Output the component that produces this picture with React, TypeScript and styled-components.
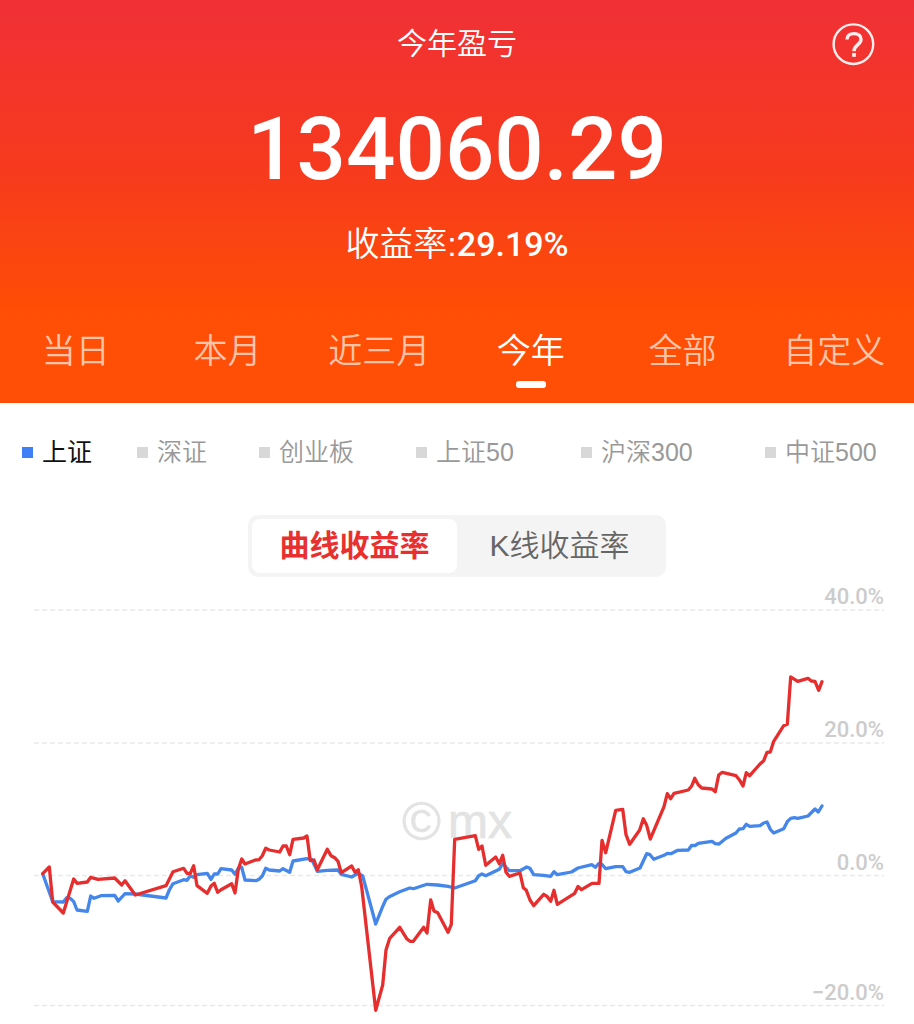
import React, { useState } from "react";
import styled, { createGlobalStyle } from "styled-components";

const GlobalStyle = createGlobalStyle`
  *, *::before, *::after { box-sizing: border-box; }
  body {
    margin: 0;
    background: #fff;
    font-family: "Liberation Sans", "Noto Sans CJK SC", sans-serif;
  }
  button {
    margin: 0;
    padding: 0;
    border: 0;
    background: none;
    font: inherit;
    cursor: pointer;
  }
`;

const Page = styled.main`
  display: flex;
  flex-direction: column;
`;

const Header = styled.header`
  display: flex;
  flex-direction: column;
  background: linear-gradient(180deg, #f03036 0%, #f6391f 40%, #ff4e05 78%);
  color: #fff;
`;

const TitleRow = styled.div`
  display: grid;
  grid-template-columns: 1fr auto 1fr;
  align-items: center;
  height: 88px;
  padding: 0 39px;
`;

const Title = styled.h1`
  grid-column: 2;
  margin: 0;
  font-size: 30px;
  line-height: 40px;
  font-weight: 350;
`;

const HelpButton = styled.button`
  justify-self: end;
  width: 44px;
  height: 44px;
  color: #fff;
  svg { display: block; }
`;

const Amount = styled.p`
  margin: 0;
  height: 120px;
  text-align: center;
  font-family: Roboto, sans-serif;
  font-size: 87px;
  line-height: 122px;
  font-weight: 500;
`;

const Rate = styled.p`
  margin: 0;
  text-align: center;
  font-size: 34px;
  line-height: 72px;
  font-weight: 350;
`;

const RateValue = styled.strong`
  font-family: Roboto, sans-serif;
  font-weight: 500;
`;

const PeriodTabs = styled.nav`
  display: grid;
  grid-template-columns: repeat(6, 1fr);
  margin-top: 40px;
  padding-right: 4px;
`;

const PeriodTab = styled.button<{ $active: boolean }>`
  display: flex;
  flex-direction: column;
  align-items: center;
  height: 83px;
  padding-top: 9px;
  font-size: 34px;
  line-height: 44px;
  font-weight: 350;
  color: ${(p) => (p.$active ? "#fff" : "#ffc4a8")};
  white-space: nowrap;
  &::after {
    content: "";
    width: 30px;
    height: 7px;
    margin-top: 8px;
    border-radius: 3px;
    background: ${(p) => (p.$active ? "#fff" : "transparent")};
  }
`;

const IndexList = styled.div`
  display: grid;
  grid-template-columns: 115fr 122fr 157fr 165fr 184fr 149fr;
  padding: 31px 0 0 22px;
`;

const IndexItem = styled.button<{ $active: boolean }>`
  display: flex;
  align-items: center;
  gap: 9px;
  font-size: 25px;
  line-height: 36px;
  font-weight: ${(p) => (p.$active ? 400 : 350)};
  color: ${(p) => (p.$active ? "#111" : "#999")};
  white-space: nowrap;
  &::before {
    content: "";
    width: 11px;
    height: 11px;
    background: ${(p) => (p.$active ? "#3f80f6" : "#d8d8d8")};
  }
`;

const ModeSwitch = styled.div`
  display: grid;
  grid-template-columns: 205px 205px;
  align-self: center;
  margin-top: 45px;
  padding: 4px;
  border-radius: 10px;
  background: #f4f4f4;
`;

const ModeButton = styled.button<{ $active: boolean }>`
  height: 54px;
  border-radius: 8px;
  font-size: 30px;
  line-height: 54px;
  font-weight: ${(p) => (p.$active ? 700 : 350)};
  color: ${(p) => (p.$active ? "#e93030" : "#666")};
  background: ${(p) => (p.$active ? "#fff" : "transparent")};
`;

const Chart = styled.svg`
  display: block;
  width: 100%;
  height: auto;
  margin-top: 7px;
`;

const GridLine = styled.line`
  stroke: #e9e9e9;
  stroke-width: 1.5;
  stroke-dasharray: 5 3;
`;

const AxisLabel = styled.text`
  font-family: Roboto, sans-serif;
  font-size: 22px;
  font-weight: 500;
  fill: #cccccc;
  text-anchor: end;
`;

const Watermark = styled.text<{ $size: number }>`
  font-size: ${(p) => p.$size}px;
  fill: #e3e3e3;
  stroke: #e3e3e3;
  stroke-width: 0.6;
`;

const Series = styled.polyline`
  fill: none;
  stroke-width: 3.3;
  stroke-linejoin: round;
  stroke-linecap: round;
`;

const periods = ["当日", "本月", "近三月", "今年", "全部", "自定义"];
const indexes = ["上证", "深证", "创业板", "上证50", "沪深300", "中证500"];
const modes = ["曲线收益率", "K线收益率"];

const gridLines = [
  { y: 610, label: "40.0%" },
  { y: 743, label: "20.0%" },
  { y: 875.5, label: "0.0%" },
  { y: 1005.5, label: "−20.0%" },
];

const indexPoints =
  "42.7,873.7 52.7,901.7 63.3,902 66.7,897.7 70.3,898.3 73.7,901.7 77,910 87.3,911.3 90.7,896 94,898.3 101,895.7 114.7,895.3 118.3,901 125,893.7 135.3,894 166,898 169.3,890 173,883.7 183.7,879.7 187,880.3 190.3,875.7 193.7,877.3 197,874.7 207.3,873.3 211,879.3 214.3,874 217.7,874 221,868.7 231.7,870 235,874.3 238.3,868.3 241.7,867.3 245,880 256,880.7 259,879.3 262.3,876 265.7,868.3 269.3,870 279.7,871 283,868.7 289.7,872.3 293,861 307,858.7 311.7,859.3 317.3,871.3 327.3,870.3 338,870 341.3,874.3 351.7,877 355,875 358.3,873.3 362.7,876 375.7,924 382.3,907.3 386,899.3 389.3,896.7 399.7,891.7 409.7,888 413.3,888.7 427,884.3 437.7,885 448,886.3 454.7,888 475.3,880.7 478.7,875.7 482,874 485.7,875.7 499.3,869.3 502.7,863.3 506,867.3 509.3,870.7 520,870.7 526.7,867 530,868.3 533.7,874.7 543.7,875.3 550.7,876.3 554,871.7 557.3,874.7 571.5,872 578,868 592,864.7 595.3,867.3 598.7,863.7 602.3,864.7 605.7,868.7 615.7,866.7 622.7,866.7 626,871.7 629.7,872.3 640,868 646.7,853.7 650,854.7 653.7,859.3 664,855.3 667.3,853.3 671,853.7 677.7,850.3 688.3,850 691.7,845.3 695,845.7 698.3,843.3 712,841.3 715.3,843.7 719,844 726,838.3 736,833 739.3,829 743,828.7 746.3,824.3 749.7,826.3 760,825.7 763.7,823 767,822 770.3,829.3 773.7,833 783.7,828.7 787.3,821.7 790.7,818.3 794.3,817.7 797.7,818.3 808,816 815,809 818.3,812 822,806";

const accountPoints =
  "42.7,873.7 49.3,867 52.7,902 63.3,913 73.7,879 77,883.3 87.3,882 90.7,877.3 98,879.3 114.7,878 121.7,885 125,880.7 135.3,895 166,885.7 173,871.7 183.7,868.3 187,873.3 190.3,873.3 193.7,865.7 197,885.7 207.3,893.3 211,886 214.3,883.3 217.7,892.3 221,889.7 231.7,883.7 235,893 238.3,869.3 241.7,859 245,864 255.3,860 259,859.7 262.3,855.7 265.7,848.3 269.3,850 279.7,852 283,846 286.3,846 289.7,854.7 293,839.3 303.7,838 307,836 310.3,860.7 314,860 317.3,869.7 327.3,849.3 331,855.7 334.7,857.7 338,861.3 341.3,872.7 351.7,866 355,872.3 358.3,869.7 361.7,886.7 375.7,1010.3 382.7,985 386,950 389.7,938.3 399.7,927.3 406.7,938.7 410,941.3 413.3,941.3 423.7,927.3 427,933 430.7,900 434,911 437.7,912.7 448,932.3 451.3,924.3 454.7,839.3 475.3,835.7 478.7,849.3 482,846 485.7,865.3 495.7,857 499.3,863.7 502.7,855.3 506,872.3 509.3,876.3 520,873 523.3,887.7 526.3,890.3 530,900 533.7,905.7 543.7,894.3 547.3,896.7 550.7,901.3 554,890.3 557.3,904.3 574.7,893.3 578,886.5 581.5,889.7 592,883.3 599,883.3 602,840.3 605.7,852.7 615.7,810.3 622.7,809.3 626,834.7 629.7,844.3 639.7,830 643.3,818.7 646.7,825.3 650.3,839 664,806.7 667.3,793.7 670.7,798.7 674,793.3 688.3,790 691.7,786 694.7,778.3 698.3,784.7 701.7,788 712,789 715.3,791.7 718.7,775 722.3,772.3 736,775.7 739.3,779.7 743,786 746.3,772.7 749.7,775.7 760,764 763.7,760.7 767,752.3 770.3,752 773.7,741.3 783.7,725.7 787.3,724.3 790.7,676.9 797.7,681.3 808,678.3 811.3,681 815,681.3 818.7,690.3 822,681.7";

export default function App() {
  const [period, setPeriod] = useState("今年");
  const [index, setIndex] = useState("上证");
  const [mode, setMode] = useState("曲线收益率");

  return (
    <Page>
      <GlobalStyle />
      <Header>
        <TitleRow>
          <Title>今年盈亏</Title>
          <HelpButton type="button" aria-label="帮助">
            <svg width="44" height="44" viewBox="0 0 44 44" fill="none" stroke="currentColor" strokeOpacity="0.92">
              <circle cx="22.4" cy="22.2" r="19.8" strokeWidth="2.4" />
              <path d="M16 17.6C16 13.6 18.8 11.6 23 11.6s7 2.2 7 5.8c0 5.2-7 5.4-7 11.8" strokeWidth="3.4" />
              <path d="M23 31v3.8" strokeWidth="3.8" />
            </svg>
          </HelpButton>
        </TitleRow>
        <Amount>134060.29</Amount>
        <Rate>
          收益率:<RateValue>29.19%</RateValue>
        </Rate>
        <PeriodTabs>
          {periods.map((name) => (
            <PeriodTab key={name} type="button" $active={name === period} onClick={() => setPeriod(name)}>
              {name}
            </PeriodTab>
          ))}
        </PeriodTabs>
      </Header>
      <IndexList>
        {indexes.map((name) => (
          <IndexItem key={name} type="button" $active={name === index} onClick={() => setIndex(name)}>
            {name}
          </IndexItem>
        ))}
      </IndexList>
      <ModeSwitch>
        {modes.map((name) => (
          <ModeButton key={name} type="button" $active={name === mode} onClick={() => setMode(name)}>
            {name}
          </ModeButton>
        ))}
      </ModeSwitch>
      <Chart viewBox="0 584 914 440" role="img" aria-label="收益率曲线">
        {gridLines.map((line) => (
          <g key={line.label}>
            <GridLine x1="34" x2="884" y1={line.y} y2={line.y} />
            <AxisLabel x="884" y={line.y - 6}>{line.label}</AxisLabel>
          </g>
        ))}
        <Watermark x="402" y="840" $size={53}>©</Watermark>
        <Watermark x="448" y="838" $size={48}>mx</Watermark>
        <Series points={indexPoints} stroke="#4486ea" />
        <Series points={accountPoints} stroke="#e62e2e" />
      </Chart>
    </Page>
  );
}
